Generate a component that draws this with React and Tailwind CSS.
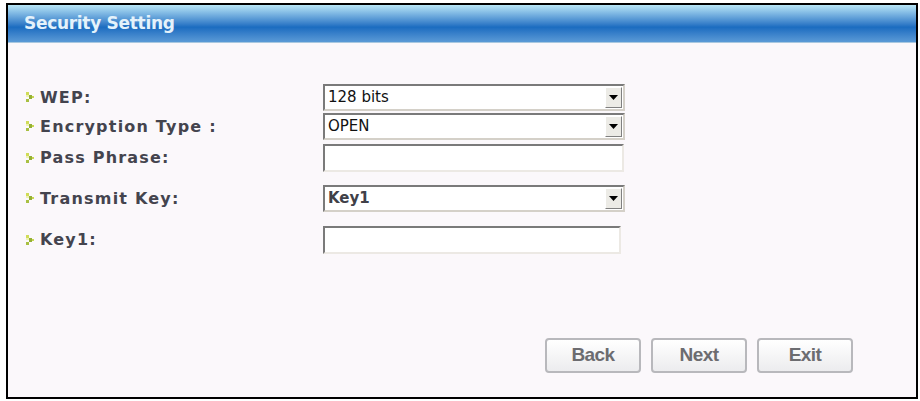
import React from 'react'

function Bullet() {
  return (
    <svg width="9" height="11" viewBox="0 0 9 11" className="shrink-0">
      <rect x="0" y="0" width="3" height="3" fill="#d0dc58" />
      <rect x="0" y="3" width="3" height="2" fill="#eef2b0" />
      <rect x="3" y="3" width="3" height="4" fill="#94b036" />
      <rect x="6" y="4" width="2" height="2" fill="#c8d850" />
      <rect x="0" y="7" width="3" height="3" fill="#a8c042" />
    </svg>
  )
}

function Select({ value, bold }) {
  return (
    <div className="w-[302px] h-[27px] flex items-stretch bg-white border-2 border-t-[#7a7a7a] border-l-[#7a7a7a] border-r-[#d4d0c8] border-b-[#d4d0c8]">
      <div
        className={`flex-1 flex items-center pl-[3px] text-[15px] text-[#111] ${
          bold ? 'font-bold text-[#404048]' : ''
        }`}
        style={{ fontFamily: bold ? 'Verdana, "DejaVu Sans", sans-serif' : 'Tahoma, "DejaVu Sans", sans-serif' }}
      >
        {value}
      </div>
      <div className="w-[17px] my-[1px] mr-[1px] flex items-center justify-center bg-[#ecebe6] border border-t-white border-l-white border-r-[#808080] border-b-[#808080]">
        <svg width="9" height="5" viewBox="0 0 9 5">
          <path d="M0 0 H9 L4.5 5 Z" fill="#000" />
        </svg>
      </div>
    </div>
  )
}

function TextBox({ w }) {
  return (
    <div
      className={`${w} h-[28px] bg-white border-2 border-t-[#7a7a7a] border-l-[#7a7a7a] border-r-[#ece9e4] border-b-[#ece9e4]`}
    />
  )
}

function Row({ label, children, className }) {
  return (
    <div className={`flex items-center ${className}`}>
      <div className="w-[315px] flex items-center gap-[5px] pl-[18px]">
        <Bullet />
        <span className="text-[16px] font-bold text-[#44444e] tracking-[1.2px]">{label}</span>
      </div>
      {children}
    </div>
  )
}

function Btn({ children }) {
  return (
    <button className="w-[96px] h-[35px] rounded-[4px] border-2 border-[#b8b8bc] bg-gradient-to-b from-white to-[#ececee] text-[19px] font-bold text-[#6c6c70] tracking-[-0.6px]" style={{ fontFamily: '"Liberation Sans Narrow", "Liberation Sans", sans-serif' }}>
      {children}
    </button>
  )
}

export default function App() {
  return (
    <div className="w-[920px] h-[401px] bg-white pt-[3px] pl-[6px]" style={{ fontFamily: '"DejaVu Sans", Verdana, sans-serif' }}>
      <div className="w-[912px] h-[396px] border-2 border-black flex flex-col bg-[#fbf8fb]">
        <div className="h-[38px] bg-gradient-to-b from-[#b8e6f6] via-[#1a6cc0] via-60% to-[#5a9ad6] flex items-center pl-[16px] border-b border-[#a8c8e0]">
          <span className="text-[17px] font-bold text-[#e4f2fb] tracking-[-0.3px]">Security Setting</span>
        </div>
        <div className="flex-1 flex flex-col pt-[41px]">
          <Row label="WEP:" className="">
            <Select value="128 bits" />
          </Row>
          <Row label="Encryption Type :" className="mt-[2px]">
            <Select value="OPEN" />
          </Row>
          <Row label="Pass Phrase:" className="mt-[4px]">
            <TextBox w="w-[301px]" />
          </Row>
          <Row label="Transmit Key:" className="mt-[13px]">
            <Select value="Key1" bold />
          </Row>
          <Row label="Key1:" className="mt-[14px]">
            <TextBox w="w-[298px]" />
          </Row>
          <div className="flex gap-[10px] pl-[537px] mt-[84px]">
            <Btn>Back</Btn>
            <Btn>Next</Btn>
            <Btn>Exit</Btn>
          </div>
        </div>
      </div>
    </div>
  )
}
